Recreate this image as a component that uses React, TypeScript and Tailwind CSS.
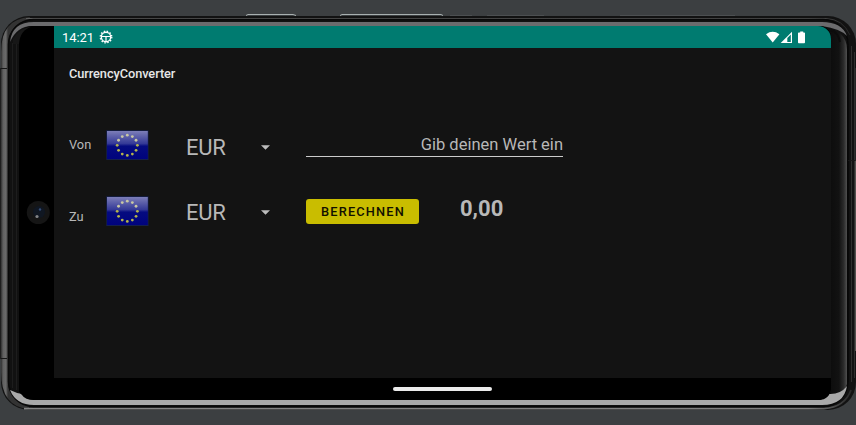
import React from 'react';

function PhoneFrame() {
  return (
    <svg className="absolute inset-0" width="856" height="425" viewBox="0 0 856 425" fill="none" aria-hidden="true">
      <defs>
        <linearGradient id="edge" x1="831" x2="847" y1="0" y2="0" gradientUnits="userSpaceOnUse">
          <stop offset="0" stopColor="#0d0d0d" />
          <stop offset="0.5" stopColor="#121212" />
          <stop offset="0.8" stopColor="#2c2c2c" />
          <stop offset="1" stopColor="#505050" />
        </linearGradient>
        <linearGradient id="leftRim" x1="1" x2="8" y1="0" y2="0" gradientUnits="userSpaceOnUse">
          <stop offset="0" stopColor="#303030" />
          <stop offset="0.3" stopColor="#606060" />
          <stop offset="0.7" stopColor="#6b6b6b" />
          <stop offset="1" stopColor="#333" />
        </linearGradient>
        <linearGradient id="topLine" x1="20" x2="850" y1="0" y2="0" gradientUnits="userSpaceOnUse">
          <stop offset="0" stopColor="#5d5d5d" />
          <stop offset="0.95" stopColor="#525252" />
          <stop offset="1" stopColor="#252525" />
        </linearGradient>
        <linearGradient id="bottomLine" x1="20" x2="850" y1="0" y2="0" gradientUnits="userSpaceOnUse">
          <stop offset="0" stopColor="#858585" />
          <stop offset="0.95" stopColor="#808080" />
          <stop offset="1" stopColor="#2b2b2b" />
        </linearGradient>
      </defs>
      <path d="M246 15.5 248 14.5H293l3 1M340 15.5l2-1H441l2 1" stroke="#a8b0b0" />
      <path d="M450 15.5H472M487 15.5H544M620 15.5H735" stroke="#4c4f51" />
      <rect x="0" y="68" width="2" height="291" fill="#1e1e1e" />
      <rect x="1" y="16" width="855" height="394" rx="28" fill="#121212" />
      <path d="M1 372V52Q1 19 30 17L29 20Q9 23 8 46V382Q10 401 29 406V409Q1 407 1 372Z" fill="url(#leftRim)" />
      <path d="M26 18.5H826Q843 19 850 35" stroke="url(#topLine)" />
      <path d="M24 408.7H824Q845 407 851 390" stroke="url(#bottomLine)" strokeWidth="1.8" />
      <rect x="8.5" y="19.5" width="839.5" height="387" rx="25" fill="#111" stroke="#080808" strokeWidth="1.5" />
      <path d="M12.5 43V388M16.5 43V390" stroke="#1d1d1d" />
      <path d="M820 26Q847 29 847 50V384Q843 398 820 399Z" fill="url(#edge)" />
      <path d="M10 42Q12 22 34 22H822Q842 22 847 36Q841 29 822 26H32Q17 26 10 42Z" fill="#6b6b6d" />
      <path d="M10 390Q16 393 22 394Q27 395 30 399L34 400H820Q826 397 828 394Q840 395 847 386Q844 405 822 405H34Q16 405 10 390Z" fill="#a9a9a9" />
      <path d="M831 30Q838 32 840 42" stroke="#0c0c0c" strokeWidth="2" />
      <path d="M847.7 46V382" stroke="#080808" />
      <path d="M851.5 46V382M854.5 52V378" stroke="#2f2f2e" />
      <path d="M1 68.5h6M1 358.5h6M848 160.5h8" stroke="#171717" />
      <rect x="855" y="68" width="1" height="93" fill="#262626" />
      <rect x="855" y="161" width="1" height="190" fill="#55524f" />
      <path d="M31 26H818Q831 26 831 39V386Q831 400 818 400H34Q25 400 22 395L19 392V37Q22 27 31 26Z" fill="#000" />
      <path d="M13 39Q19 28 32 26.5Q20 30 19 44H13Z" fill="#171717" />
    </svg>
  );
}

function EuFlag({ id }: { id: string }) {
  const stars = Array.from({ length: 12 }, (_, i) => {
    const a = (i * Math.PI) / 6;
    return { x: 21.3 + Math.sin(a) * 10.1, y: 15.3 - Math.cos(a) * 10.1 };
  });
  return (
    <svg className="shrink-0" width="43" height="31" viewBox="0 0 43 31" aria-label="EU">
      <defs>
        <linearGradient id={id} x1="0" x2="0" y1="0" y2="1">
          <stop offset="0" stopColor="#7c7eb8" />
          <stop offset="0.45" stopColor="#343997" />
          <stop offset="0.54" stopColor="#050b80" />
          <stop offset="1" stopColor="#00037d" />
        </linearGradient>
      </defs>
      <rect x="0.3" y="0.3" width="42.2" height="29.7" fill="#15204d" />
      <rect x="1" y="1" width="40.8" height="28" fill={`url(#${id})`} />
      {stars.map((s, i) => (
        <circle key={i} cx={s.x} cy={s.y} r="1.4" fill={s.y < 13 ? '#c9c8a4' : '#b4b34b'} />
      ))}
    </svg>
  );
}

function CurrencySelect() {
  return (
    <div className="flex w-[84px] items-center justify-between text-[22px] leading-[26px]">
      <span className="tracking-[-0.2px]">EUR</span>
      <svg className="mb-[2px]" width="9" height="5" viewBox="0 0 9 5" aria-hidden="true">
        <path d="M0 0.3H9L4.5 4.8Z" fill="#bcbcbc" />
      </svg>
    </div>
  );
}

function StatusBar() {
  return (
    <header className="flex h-[22px] shrink-0 items-center bg-[#007b70] pl-2 pr-[25px] text-white">
      <span className="pt-px text-[13px] leading-[20px] tracking-[-0.1px]">14:21</span>
      <svg className="ml-[5px]" width="14" height="14" viewBox="0 0 14 14" fill="none" stroke="#fff" aria-hidden="true">
        <circle cx="7" cy="7" r="4.7" strokeWidth="1.4" />
        <circle cx="7" cy="7" r="5.8" strokeWidth="1.3" strokeDasharray="1.5 1.537" />
        <path d="M2.5 6.5H11.5M7 7V11.5" strokeWidth="1.2" />
      </svg>
      <svg className="ml-auto" width="40" height="13" viewBox="0 0 40 13" aria-hidden="true">
        <path d="M0 3.2Q6.7 -1.7 13.4 3.2L6.7 11.6Z" fill="#fff" />
        <path d="M14.7 12L26 .8V12Z" fill="#fff" />
        <path d="M21.3 7L24.8 3.4V11H21.3Z" fill="#007b70" />
        <path d="M34.2 .5h3v1h1q.8 0 .8.8v9q0 .9-.8.9h-5.4q-.8 0-.8-.9v-9q0-.8.8-.8h1.4Z" fill="#fff" />
      </svg>
    </header>
  );
}

export default function App() {
  return (
    <div className="relative h-[425px] w-[856px] overflow-hidden bg-[#3c3f41] font-[Roboto,sans-serif] text-[#b8b8b8]">
      <PhoneFrame />
      <div className="relative flex h-full pb-[25px] pl-[19px] pr-[25px] pt-[26px]">
        <div className="flex w-[35px] items-center justify-center pl-[3px]">
          <svg width="24" height="24" viewBox="0 0 24 24" aria-hidden="true">
            <circle cx="12.3" cy="11.5" r="11.5" fill="#151515" />
            <circle cx="13" cy="11" r="6" fill="#101722" />
            <circle cx="14" cy="8.5" r="1.2" fill="#344c76" />
            <circle cx="11" cy="15.5" r="1.6" fill="#838486" />
          </svg>
        </div>
        <div className="flex flex-1 flex-col overflow-hidden rounded-tr-[13px] rounded-br-[14px] bg-black">
          <StatusBar />
          <main className="h-[330px] shrink-0 bg-[#131313] pl-[15px]">
            <h1 className="pt-[16px] text-[12.8px] font-medium leading-[20px] tracking-[-0.08px] text-[#e6e6e6]">CurrencyConverter</h1>
            <section className="mt-[46px] flex h-[33px] items-start">
              <label className="w-[37px] pt-[6px] text-[12.8px] leading-[18px]">Von</label>
              <EuFlag id="flag-from" />
              <div className="ml-[37px] pt-[5px]"><CurrencySelect /></div>
              <div className="ml-[36px] h-[27px] w-[257px] border-b border-[#cbcbcb] pt-[4px] text-right text-[16.5px] leading-[22px]">
                Gib deinen Wert ein
              </div>
            </section>
            <section className="mt-[33px] flex h-[33px] items-start">
              <label className="w-[37px] pt-[12px] text-[12.8px] leading-[18px]">Zu</label>
              <EuFlag id="flag-to" />
              <div className="ml-[37px] pt-[4px]"><CurrencySelect /></div>
              <button className="ml-[36px] mt-[3px] h-[25px] w-[113px] rounded-[3px] bg-[#c9bd00] pl-px pt-px text-[12.8px] font-medium leading-[24px] tracking-[1.15px] text-[#121000]">
                BERECHNEN
              </button>
              <strong className="ml-[41px] text-[22px] font-bold leading-[26px]">0,00</strong>
            </section>
          </main>
          <footer className="flex h-[22px] items-center pl-[339px]">
            <div className="h-1 w-[99px] rounded-full bg-[#ebebeb]" />
          </footer>
        </div>
      </div>
    </div>
  );
}
